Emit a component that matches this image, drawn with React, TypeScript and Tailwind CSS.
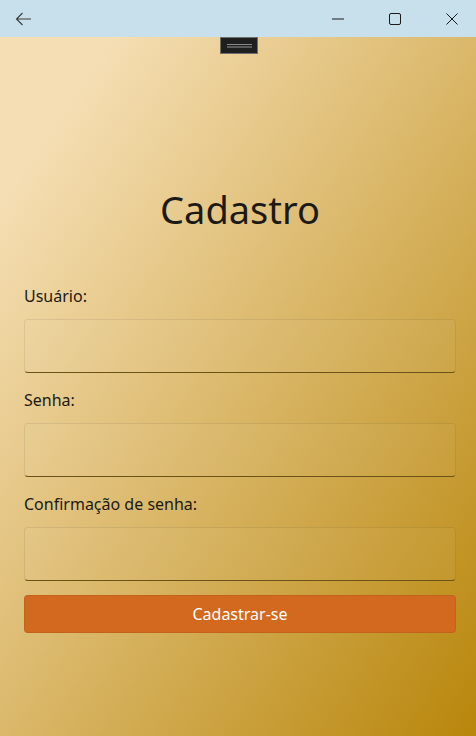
export default function App() {
  return (
    <div className="flex h-[736px] w-[476px] flex-col overflow-hidden font-['Noto_Sans',sans-serif]">
      <header className="flex h-[37px] shrink-0 items-center overflow-hidden bg-[#c8e0ec] text-[#1a1a1a]">
        <div className="flex w-[46px] justify-center">
          <svg width="17" height="14" viewBox="0 0 17 14" fill="none" stroke="#3a3a3a" strokeWidth="1.1">
            <path d="M16 7H1.5M7.5 1L1.5 7l6 6" />
          </svg>
        </div>
        <div className="flex-1" />
        <div className="flex h-full translate-x-[4px]">
          <div className="flex h-full w-[57px] items-center justify-center">
            <svg width="12" height="2" viewBox="0 0 12 2"><path d="M0 1h12" stroke="#1a1a1a" strokeWidth="1" /></svg>
          </div>
          <div className="flex h-full w-[57px] items-center justify-center">
            <svg width="12" height="12" viewBox="0 0 12 12" fill="none">
              <rect x="0.5" y="0.5" width="11" height="11" rx="1.5" stroke="#1a1a1a" strokeWidth="1" />
            </svg>
          </div>
          <div className="flex h-full w-[57px] items-center justify-center">
            <svg width="12" height="12" viewBox="0 0 12 12" fill="none">
              <path d="M0.5 0.5l11 11M11.5 0.5l-11 11" stroke="#1a1a1a" strokeWidth="1" />
            </svg>
          </div>
        </div>
      </header>

      <main className="relative flex-1 bg-[linear-gradient(to_bottom_right,#f5deb3_12%,#b8860b_100%)] pl-6 pr-5">
        <div className="absolute left-[220px] top-0 flex h-[17px] w-[38px] items-center justify-center border border-[#6e6e6e] bg-[#1f1f1f]">
          <div className="flex w-[25px] flex-col gap-[1px]">
            <div className="h-[1px] bg-[#8a8a8a]" />
            <div className="h-[2px] bg-[#5a5a5a]" />
          </div>
        </div>

        <h1 className="pt-[146px] text-center text-[38px] leading-[52px] font-normal text-[#1c1a16]">
          Cadastro
        </h1>

        <form className="mt-[49px] flex flex-col">
          <label className="text-[16px] leading-[24px] text-[#1c1a16]">Usuário:</label>
          <input className="mt-[11px] h-[54px] rounded-[4px] border border-[#00000014] border-b-[#6b5217] bg-[#ffffff0a] outline-none" />

          <label className="mt-[15px] text-[16px] leading-[24px] text-[#1c1a16]">Senha:</label>
          <input type="password" className="mt-[11px] h-[54px] rounded-[4px] border border-[#00000014] border-b-[#6b5217] bg-[#ffffff0a] outline-none" />

          <label className="mt-[15px] text-[16px] leading-[24px] text-[#1c1a16]">Confirmação de senha:</label>
          <input type="password" className="mt-[11px] h-[54px] rounded-[4px] border border-[#00000014] border-b-[#6b5217] bg-[#ffffff0a] outline-none" />

          <button type="button" className="mt-[14px] h-[38px] rounded-[4px] border border-[#00000010] bg-[#d2691e] text-[16px] text-white">
            Cadastrar-se
          </button>
        </form>
      </main>
    </div>
  );
}
